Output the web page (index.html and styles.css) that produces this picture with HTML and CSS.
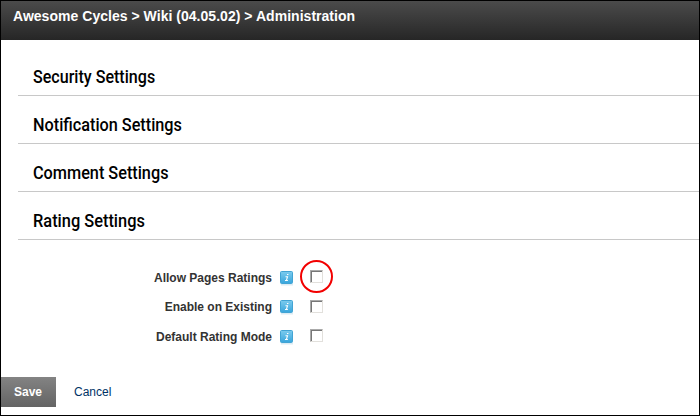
FILE: index.html
```html
<!DOCTYPE html>
<html lang="en">
<head>
<meta charset="utf-8">
<title>Administration</title>
<link rel="stylesheet" href="styles.css">
</head>
<body>
<svg class="defs" width="0" height="0" aria-hidden="true">
  <defs>
    <linearGradient id="blue" x1="0" y1="0" x2="0" y2="1">
      <stop offset="0" stop-color="#7ccbee"/>
      <stop offset="1" stop-color="#38a5dc"/>
    </linearGradient>
    <symbol id="info" viewBox="0 0 14 15">
      <rect x="1" y="13" width="12" height="1.5" fill="#dcebf3"/>
      <rect x=".5" y=".5" width="12" height="12" rx="1" fill="url(#blue)" stroke="#42a4d4"/>
      <path d="M7 3.5h1.4M5.5 5.8h2L6.4 9.5H5M6.4 9.5h1.5" fill="none" stroke="#fff" stroke-width="1.1"/>
    </symbol>
  </defs>
</svg>
<div class="page">
  <header class="bar">Awesome Cycles &gt; Wiki (04.05.02) &gt; Administration</header>
  <main class="sections">
    <h2 class="heading"><span class="security">Security Settings</span></h2>
    <h2 class="heading"><span class="notification">Notification Settings</span></h2>
    <h2 class="heading"><span class="comment">Comment Settings</span></h2>
    <h2 class="heading"><span class="rating">Rating Settings</span></h2>
  </main>
  <div class="form">
    <div class="row"><span class="label">Allow Pages Ratings</span><svg class="info"><use href="#info"/></svg><span class="check marked"></span></div>
    <div class="row"><span class="label">Enable on Existing</span><svg class="info"><use href="#info"/></svg><span class="check"></span></div>
    <div class="row"><span class="label">Default Rating Mode</span><svg class="info"><use href="#info"/></svg><span class="check"></span></div>
  </div>
  <footer class="actions"><span class="save">Save</span><a class="cancel">Cancel</a></footer>
</div>
</body>
</html>
```

FILE: styles.css
```css
*, *::after { box-sizing: border-box; }
body { margin: 0; font-family: "Liberation Sans", Arial, sans-serif; font-size: 12px; }
.defs { position: absolute; }
.page {
  width: 700px;
  height: 416px;
  border: 1px solid #000;
  background: #fff;
  display: flex;
  flex-direction: column;
}
.bar {
  height: 39px;
  padding: 7px 0 0 12px;
  background: linear-gradient(#4b4b4b, #262626);
  color: #fff;
  font-size: 14px;
  font-weight: bold;
  line-height: 16px;
  letter-spacing: .03px;
}
.sections { padding: 8px 0 0 17px; }
.heading {
  height: 48px;
  margin: 0;
  padding: 18px 0 0 14.5px;
  border-bottom: 1px solid #c8c8c8;
  font-family: Roboto, sans-serif;
  font-size: 18px;
  font-weight: 500;
  line-height: 22px;
  color: #000;
}
.heading span { display: inline-block; transform-origin: left; }
.security { transform: scaleX(.893); }
.notification { transform: scaleX(.902); }
.comment { transform: scaleX(.903); }
.rating { transform: scaleX(.91); }
.form { padding-top: 23px; }
.row { height: 29.5px; display: flex; align-items: center; }
.label { width: 271px; text-align: right; font-weight: bold; color: #333; white-space: nowrap; }
.info { width: 14px; height: 15px; margin: 1px 0 0 8px; }
.check {
  position: relative;
  width: 13px;
  height: 13px;
  margin: 0 0 2px 16px;
  border: 1px solid;
  border-color: #aaa #e2e0dc #e2e0dc #aaa;
  box-shadow: inset 1px 1px #777;
}
.marked::after {
  content: "";
  position: absolute;
  left: -11px;
  top: -11px;
  width: 33px;
  height: 33px;
  border: 2px solid #f20000;
  border-radius: 50%;
}
.actions { margin-top: auto; padding-bottom: 8px; display: flex; align-items: center; }
.save {
  width: 55px;
  height: 30px;
  padding-left: 13px;
  background: linear-gradient(#838383, #646464);
  color: #fff;
  font-weight: bold;
  line-height: 30px;
}
.cancel { margin-left: 18px; color: #003366; }
```
